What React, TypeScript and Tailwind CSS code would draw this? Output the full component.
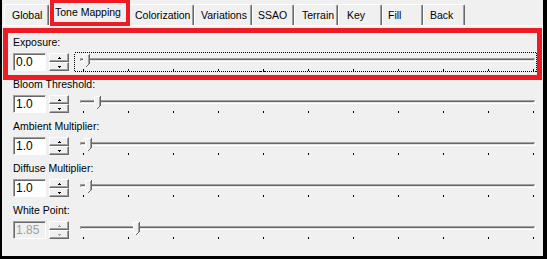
import React from "react";

type Row = { label: string; value: string; thumb: number; focused?: boolean; disabled?: boolean };

const rows: Row[] = [
  { label: "Exposure:", value: "0.0", thumb: 86, focused: true },
  { label: "Bloom Threshold:", value: "1.0", thumb: 97 },
  { label: "Ambient Multiplier:", value: "1.0", thumb: 88 },
  { label: "Diffuse Multiplier:", value: "1.0", thumb: 88 },
  { label: "White Point:", value: "1.85", thumb: 136, disabled: true },
];

const tabs = [
  { label: "Global", w: "w-[45px]", pl: "pl-[7px]" },
  { label: "Tone Mapping", w: "w-[80px]", pl: "pl-[5px]", selected: true },
  { label: "Colorization", w: "w-[65px]", pl: "pl-[5px]" },
  { label: "Variations", w: "w-[58px]", pl: "pl-[6px]" },
  { label: "SSAO", w: "w-[42px]", pl: "pl-[5px]" },
  { label: "Terrain", w: "w-[44px]", pl: "pl-[7px]" },
  { label: "Key", w: "w-[44px]", pl: "pl-[8px]" },
  { label: "Fill", w: "w-[41px]", pl: "pl-[5px]" },
  { label: "Back", w: "w-[42px]", pl: "pl-[6px]" },
];

function Arrow({ up, disabled }: { up: boolean; disabled?: boolean }) {
  const c = disabled ? "#a0a0a0" : "#000";
  return (
    <svg width="3" height="2" shapeRendering="crispEdges">
      {up ? (
        <>
          <rect x="1" y="0" width="1" height="1" fill={c} />
          <rect x="0" y="1" width="3" height="1" fill={c} />
        </>
      ) : (
        <>
          <rect x="0" y="0" width="3" height="1" fill={c} />
          <rect x="1" y="1" width="1" height="1" fill={c} />
        </>
      )}
    </svg>
  );
}

function Spinner({ disabled }: { disabled?: boolean }) {
  const btn =
    "h-[9px] w-[20px] flex items-center justify-center bg-[#f0f0f0] border-t border-l border-white border-r border-b border-r-[#696969] border-b-[#696969] shadow-[inset_-1px_-1px_0_#a0a0a0]";
  return (
    <div className="flex flex-col ml-[3px]">
      <div className={btn}>
        <Arrow up disabled={disabled} />
      </div>
      <div className={btn}>
        <Arrow up={false} disabled={disabled} />
      </div>
    </div>
  );
}

function Slider({ thumb, focused }: { thumb: number; focused?: boolean }) {
  const W = 463;
  const ox = 74;
  const cx = thumb - ox;
  const ticks = Array.from({ length: 11 }, (_, i) => 9 + 45 * i);
  return (
    <svg width={W} height="20" className="ml-[5px] -mt-[1px]" shapeRendering="crispEdges">
      <rect x="6" y="6" width="455" height="1" fill="#a0a0a0" />
      <rect x="7" y="7" width="453" height="1" fill="#696969" />
      <rect x="7" y="8" width="453" height="1" fill="#e3e3e3" />
      <rect x="6" y="9" width="456" height="1" fill="#ffffff" />
      <rect x="6" y="6" width="1" height="3" fill="#a0a0a0" />
      <rect x="461" y="6" width="1" height="4" fill="#ffffff" />
      {ticks.map((t) => (
        <rect key={t} x={t} y="17" width="1" height="2" fill="#000" />
      ))}
      <polygon
        points={`${cx - 3},2 ${cx + 4},2 ${cx + 4},11 ${cx + 0.5},14.5 ${cx - 3},11`}
        fill="#f0f0f0"
        shapeRendering="auto"
      />
      <rect x={cx - 3} y="2" width="1" height="10" fill="#ffffff" />
      <rect x={cx - 3} y="2" width="7" height="1" fill="#ffffff" />
      <rect x={cx + 3} y="2" width="1" height="10" fill="#696969" />
      <rect x={cx + 2} y="3" width="1" height="9" fill="#a0a0a0" />
      <rect x={cx + 2} y="12" width="1" height="1" fill="#696969" />
      <rect x={cx + 1} y="13" width="1" height="1" fill="#696969" />
      <rect x={cx} y="14" width="1" height="1" fill="#696969" />
      <rect x={cx - 2} y="12" width="1" height="1" fill="#ffffff" />
      <rect x={cx - 1} y="13" width="1" height="1" fill="#ffffff" />
      {focused && (
        <rect
          x="0.5"
          y="0.5"
          width={W - 1}
          height="19"
          fill="none"
          stroke="#000"
          strokeWidth="1"
          strokeDasharray="1 1"
        />
      )}
    </svg>
  );
}

function ControlRow({ row }: { row: Row }) {
  return (
    <div className="h-[42px] flex flex-col">
      <div className="h-[13px] leading-[13px] text-black whitespace-nowrap">{row.label}</div>
      <div className="flex items-start mt-[4px]">
        <div
          className={
            "w-[33px] h-[18px] border-t border-l border-[#a0a0a0] border-b border-r border-b-white border-r-white shadow-[inset_1px_1px_0_#696969] pl-[2px] pt-[1px] text-[12px] leading-[14px] " +
            (row.disabled ? "bg-[#f0f0f0] text-[#a0a0a0]" : "bg-white text-black")
          }
        >
          {row.value}
        </div>
        <Spinner disabled={row.disabled} />
        <Slider thumb={row.thumb} focused={row.focused} />
      </div>
    </div>
  );
}

export default function App() {
  return (
    <div className="relative w-[547px] h-[259px] bg-black pl-[2px] pr-[4px] pb-[3px] font-['Liberation_Sans',Arial,sans-serif] text-[10.5px] overflow-hidden">
      <div className="h-full bg-[#f0f0f0] flex flex-col">
        <div className="h-[25px] flex items-end pl-[2px] relative z-10">
          {tabs.map((t) =>
            t.selected ? (
              <div
                key={t.label}
                className={
                  t.w +
                  " " +
                  t.pl +
                  " h-[26px] -mb-[1px] bg-[#f0f0f0] border-t border-l border-white border-r border-r-[#696969] rounded-t-[2px] shadow-[inset_-1px_0_0_#a0a0a0] pt-[5px] leading-[13px] whitespace-nowrap"
                }
              >
                {t.label}
              </div>
            ) : (
              <div
                key={t.label}
                className={
                  t.w +
                  " " +
                  t.pl +
                  " h-[21px] bg-[#f0f0f0] border-t border-l border-white border-r border-r-[#696969] rounded-t-[2px] shadow-[inset_-1px_0_0_#a0a0a0] pt-[4px] leading-[13px] whitespace-nowrap"
                }
              >
                {t.label}
              </div>
            )
          )}
        </div>
        <div className="flex-1 border-t border-white pl-[11px] pt-[10px] flex flex-col">
          {rows.map((r) => (
            <ControlRow key={r.label} row={r} />
          ))}
        </div>
      </div>
      <div className="absolute left-[50px] top-0 w-[80px] h-[26px] border-[4px] border-t-[3px] border-[#ed1c24] z-20 pointer-events-none" />
      <div className="absolute left-[3px] top-[28px] w-[539px] h-[52px] border-[5px] border-[#ed1c24] z-20 pointer-events-none" />
    </div>
  );
}
